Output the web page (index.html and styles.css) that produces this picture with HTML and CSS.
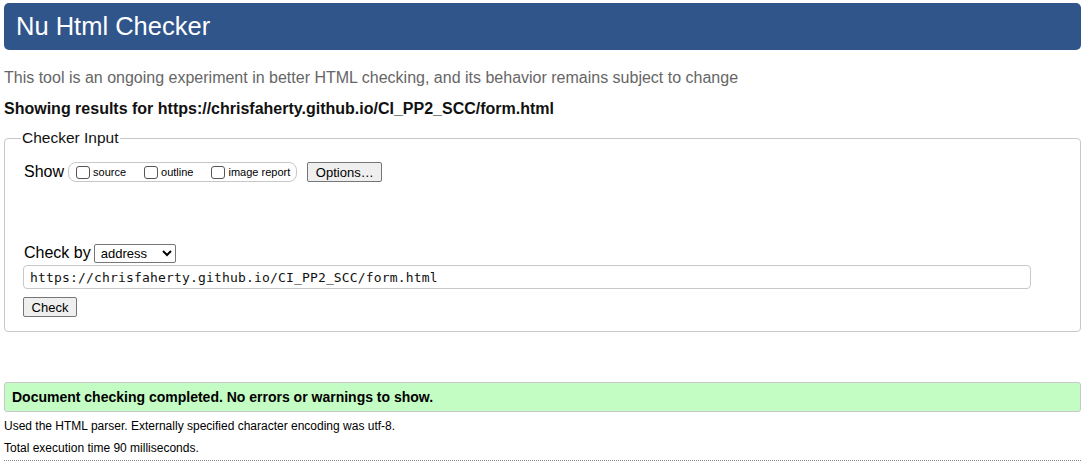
FILE: index.html
```html
<!DOCTYPE html>
<html lang="en">
<head>
<meta charset="utf-8">
<title>Showing results for https://chrisfaherty.github.io/CI_PP2_SCC/form.html - Nu Html Checker</title>
<link rel="stylesheet" href="styles.css">
</head>
<body>
<h1 class="banner">Nu Html Checker</h1>
<p class="intro">This tool is an ongoing experiment in better HTML checking, and its behavior remains subject to change</p>
<p class="results-for">Showing results for https://chrisfaherty.github.io/CI_PP2_SCC/form.html</p>
<form class="checker">
  <fieldset class="checker-input">
    <legend class="checker-legend">Checker Input</legend>
    <div class="show-row">
      <span class="show-label">Show</span>
      <fieldset class="show-box">
        <label class="opt"><input type="checkbox" class="cb">source</label>
        <label class="opt"><input type="checkbox" class="cb">outline</label>
        <label class="opt"><input type="checkbox" class="cb">image report</label>
      </fieldset>
      <button type="button" class="btn options-btn">Options…</button>
    </div>
    <div class="checkby-row">
      <span class="checkby-label">Check by</span>
      <select class="checkby-select"><option>address</option></select>
    </div>
    <input type="text" class="doc-url" value="https://chrisfaherty.github.io/CI_PP2_SCC/form.html">
    <div class="submit-row"><button type="button" class="btn check-btn">Check</button></div>
  </fieldset>
</form>
<p class="success">Document checking completed. No errors or warnings to show.</p>
<p class="details">Used the HTML parser. Externally specified character encoding was utf-8.</p>
<p class="details details-last">Total execution time 90 milliseconds.</p>
<hr class="rule">
</body>
</html>
```
FILE: styles.css
```css
html { background: #fff; }
body {
  margin: 0;
  padding: 3px 5px 0 4px;
  font-family: "Liberation Sans", Arial, Helvetica, sans-serif;
  color: #000;
}
.banner {
  margin: 0;
  height: 47px;
  background: #30558b;
  color: #fff;
  font-weight: normal;
  font-size: 25.5px;
  line-height: 47px;
  padding-left: 12px;
  border-radius: 5px;
}
.intro {
  margin: 18px 0 0 0;
  font-size: 16px;
  line-height: 20px;
  color: #666;
}
.results-for {
  margin: 11px 0 0 0;
  font-size: 16px;
  line-height: 20px;
  font-weight: bold;
  color: #111;
}
.checker { margin: 0; }
.checker-input {
  margin: 10px 0 0 0;
  padding: 14px 18px 14px 18px;
  border: 1px solid #c8c8c8;
  border-radius: 4px;
}
.checker-legend {
  margin-left: -2px;
  padding: 0 1px;
  font-size: 15.5px;
  color: #111;
}
.show-row {
  display: flex;
  align-items: center;
  height: 22px;
}
.show-label { font-size: 16px; margin-right: 4px; margin-left: 1px; }
.show-box {
  display: flex;
  align-items: center;
  margin: 0;
  padding: 0 6px 0 7px;
  height: 18px;
  border: 1px solid #c8c8c8;
  border-radius: 8px;
}
.opt {
  display: flex;
  align-items: center;
  font-size: 11px;
  margin-right: 18px;
}
.opt:last-child { margin-right: 0; }
.cb {
  appearance: none;
  width: 14px;
  height: 13px;
  margin: 0 3px 0 0;
  border: 1px solid #555;
  border-radius: 3px;
  background: #fff;
}
.btn {
  font-family: "Liberation Sans", Arial, sans-serif;
  font-size: 13px;
  background: #efefef;
  border: 1px solid #767676;
  border-radius: 2px;
  color: #000;
  padding: 0 6px;
  height: 20px;
}
.options-btn { margin-left: 10px; width: 75px; }
.checkby-row {
  display: flex;
  align-items: center;
  margin-top: 60px;
  height: 20px;
}
.checkby-label { font-size: 16px; margin-right: 3px; margin-left: 1px; }
.checkby-select {
  font-family: "Liberation Sans", Arial, sans-serif;
  font-size: 13px;
  width: 82px;
  height: 19px;
  border: 1px solid #767676;
  border-radius: 2px;
  background: #fff;
  padding: 0 2px;
}
.doc-url {
  display: block;
  box-sizing: border-box;
  margin-top: 2px;
  width: 1008px;
  height: 24px;
  padding: 0 6px;
  font-family: "DejaVu Sans Mono", monospace;
  font-size: 13px;
  letter-spacing: 0.17px;
  color: #111;
  border: 1px solid #c8c8c8;
  border-radius: 4px;
}
.submit-row { margin-top: 8px; }
.check-btn { width: 54px; padding: 0; }
.success {
  margin: 50px 0 0 0;
  height: 28px;
  line-height: 28px;
  padding-left: 7px;
  background: #c4fdc4;
  border: 1px solid #c8c8c8;
  border-radius: 3px;
  font-size: 14px;
  font-weight: bold;
}
.details {
  margin: 7px 0 0 0;
  font-size: 12px;
  line-height: 14px;
}
.details-last { margin-top: 8px; }
.rule {
  margin: 5px 0 0 0;
  border: 0;
  border-top: 1px dotted #888;
}
```
